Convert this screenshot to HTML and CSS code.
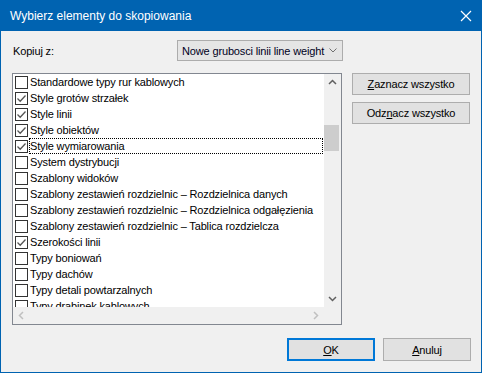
FILE: index.html
```html
<!DOCTYPE html>
<html lang="pl">
  <head>
    <meta charset="UTF-8" />
    <title>Wybierz elementy do skopiowania</title>
    <link rel="stylesheet" href="styles.css">
  </head>
  <body>
    <div class="dialog">
      <div class="titlebar">
        <span class="title">Wybierz elementy do skopiowania</span>
        <svg class="close" width="12" height="12" viewBox="0 0 12 12">
          <path d="M1 1 L11 11 M11 1 L1 11" stroke="#fff" stroke-width="1.2" fill="none" />
        </svg>
      </div>

      <div class="content">
        <div class="source-row">
          <span class="source-label">Kopiuj z:</span>
          <div class="combo">
            <span class="combo-text">Nowe grubosci linii line weight</span>
            <svg width="8" height="5" viewBox="0 0 8 5">
              <path d="M0.5 0.5 L4 4 L7.5 0.5" stroke="#707070" stroke-width="1" fill="none" />
            </svg>
          </div>
        </div>

        <div class="main-row">
          <div class="listbox">
            <ul class="items">
              <li class="item"><span class="check"></span><span class="label">Standardowe typy rur kablowych</span></li>
              <li class="item checked"><span class="check"></span><span class="label">Style grotów strzałek</span></li>
              <li class="item checked"><span class="check"></span><span class="label">Style linii</span></li>
              <li class="item checked"><span class="check"></span><span class="label">Style obiektów</span></li>
              <li class="item checked focused"><span class="check"></span><span class="label">Style wymiarowania</span></li>
              <li class="item"><span class="check"></span><span class="label">System dystrybucji</span></li>
              <li class="item"><span class="check"></span><span class="label">Szablony widoków</span></li>
              <li class="item"><span class="check"></span><span class="label">Szablony zestawień rozdzielnic – Rozdzielnica danych</span></li>
              <li class="item"><span class="check"></span><span class="label">Szablony zestawień rozdzielnic – Rozdzielnica odgałęzienia</span></li>
              <li class="item"><span class="check"></span><span class="label">Szablony zestawień rozdzielnic – Tablica rozdzielcza</span></li>
              <li class="item checked"><span class="check"></span><span class="label">Szerokości linii</span></li>
              <li class="item"><span class="check"></span><span class="label">Typy boniowań</span></li>
              <li class="item"><span class="check"></span><span class="label">Typy dachów</span></li>
              <li class="item"><span class="check"></span><span class="label">Typy detali powtarzalnych</span></li>
              <li class="item"><span class="check"></span><span class="label">Typy drabinek kablowych</span></li>
            </ul>

            <div class="vscroll">
              <svg class="arrow" width="17" height="17" viewBox="0 0 17 17">
                <path d="M5 10 L8.5 6.5 L12 10" stroke="#606060" stroke-width="1.5" fill="none" />
              </svg>
              <div class="track">
                <div class="thumb"></div>
              </div>
              <svg class="arrow" width="17" height="17" viewBox="0 0 17 17">
                <path d="M5 7 L8.5 10.5 L12 7" stroke="#606060" stroke-width="1.5" fill="none" />
              </svg>
            </div>

            <div class="hscroll">
              <svg class="arrow" width="17" height="17" viewBox="0 0 17 17">
                <path d="M10 5 L6.5 8.5 L10 12" stroke="#c0c0c0" stroke-width="1.5" fill="none" />
              </svg>
              <svg class="arrow" width="17" height="17" viewBox="0 0 17 17">
                <path d="M7 5 L10.5 8.5 L7 12" stroke="#c0c0c0" stroke-width="1.5" fill="none" />
              </svg>
            </div>

            <div class="corner"></div>
          </div>

          <div class="side-buttons">
            <button class="btn"><u>Z</u>aznacz wszystko</button>
            <button class="btn">Odz<u>n</u>acz wszystko</button>
          </div>
        </div>

        <div class="footer">
          <button class="btn btn-dialog btn-default"><u>O</u>K</button>
          <button class="btn btn-dialog"><u>A</u>nuluj</button>
        </div>
      </div>
    </div>
  </body>
</html>
```

FILE: styles.css
```css
* {
  margin: 0;
  padding: 0;
  box-sizing: border-box;
}

body {
  font-family: "Liberation Sans", Arial, sans-serif;
  font-size: 11px;
  letter-spacing: -0.15px;
  background-color: #f0f0f0;
  color: #000;
}

.dialog {
  width: 482px;
  height: 373px;
  display: flex;
  flex-direction: column;
  border: 1px solid #0063b1;
  border-top: none;
  background-color: #f0f0f0;
}

.titlebar {
  height: 31px;
  margin: 0 -1px;
  background-color: #0063b1;
  color: #fff;
  display: flex;
  align-items: center;
  justify-content: space-between;
  padding: 0 10px 0 10px;
  flex-shrink: 0;
}

.title {
  font-size: 12px;
  letter-spacing: 0;
}

.content {
  flex: 1;
  display: flex;
  flex-direction: column;
  padding: 9px 10px 0 11px;
}

.source-row {
  display: flex;
  align-items: center;
  height: 21px;
}

.source-label {
  width: 165px;
  padding-left: 1px;
}

.combo {
  width: 166px;
  height: 21px;
  display: flex;
  align-items: center;
  justify-content: space-between;
  padding: 0 5px 0 4px;
  background-color: #e5e5e5;
  border: 1px solid #acacac;
}

.combo-text {
  white-space: nowrap;
  color: #000022;
}

.main-row {
  display: flex;
  margin-top: 12px;
}

.listbox {
  width: 330px;
  height: 252px;
  border: 1px solid #828790;
  background-color: #fff;
  display: grid;
  grid-template-columns: 311px 17px;
  grid-template-rows: 233px 17px;
}

.items {
  list-style: none;
  overflow: hidden;
  padding-left: 2px;
}

.item {
  height: 16px;
  display: flex;
  align-items: center;
  white-space: nowrap;
}

.check {
  width: 13px;
  height: 13px;
  flex-shrink: 0;
  border: 1px solid #333;
  background-color: #fff;
}

.item.checked .check {
  background: #fff url("data:image/svg+xml,%3Csvg xmlns='http://www.w3.org/2000/svg' width='11' height='11'%3E%3Cpath d='M1.5 5.5 L4.2 8.2 L9.5 2.5' stroke='%23555' stroke-width='1.3' fill='none'/%3E%3C/svg%3E") no-repeat center;
}

.label {
  flex: 1;
  height: 16px;
  line-height: 15px;
  padding-left: 1px;
  margin-left: 1px;
  margin-right: 1px;
  border: 1px solid transparent;
  border-left: none;
}

.item.focused .label {
  border: 1px dotted #000;
  padding-left: 0;
}

.vscroll {
  background-color: #f0f0f0;
  display: flex;
  flex-direction: column;
}

.arrow {
  display: block;
  flex-shrink: 0;
}

.track {
  flex: 1;
  padding-top: 34px;
}

.thumb {
  width: 15px;
  height: 26px;
  background-color: #cdcdcd;
}

.hscroll {
  background-color: #f0f0f0;
  display: flex;
  justify-content: space-between;
}

.corner {
  background-color: #f0f0f0;
}

.side-buttons {
  display: flex;
  flex-direction: column;
  gap: 7px;
  margin-left: 10px;
}

.btn {
  font-family: inherit;
  font-size: 11px;
  letter-spacing: -0.15px;
  color: #000;
  width: 118px;
  height: 22px;
  background-color: #e1e1e1;
  border: 1px solid #adadad;
}

.footer {
  display: flex;
  justify-content: flex-end;
  gap: 8px;
  margin-top: 13px;
}

.btn-dialog {
  width: 88px;
  height: 23px;
}

.btn-default {
  border: 2px solid #0078d7;
}
```
